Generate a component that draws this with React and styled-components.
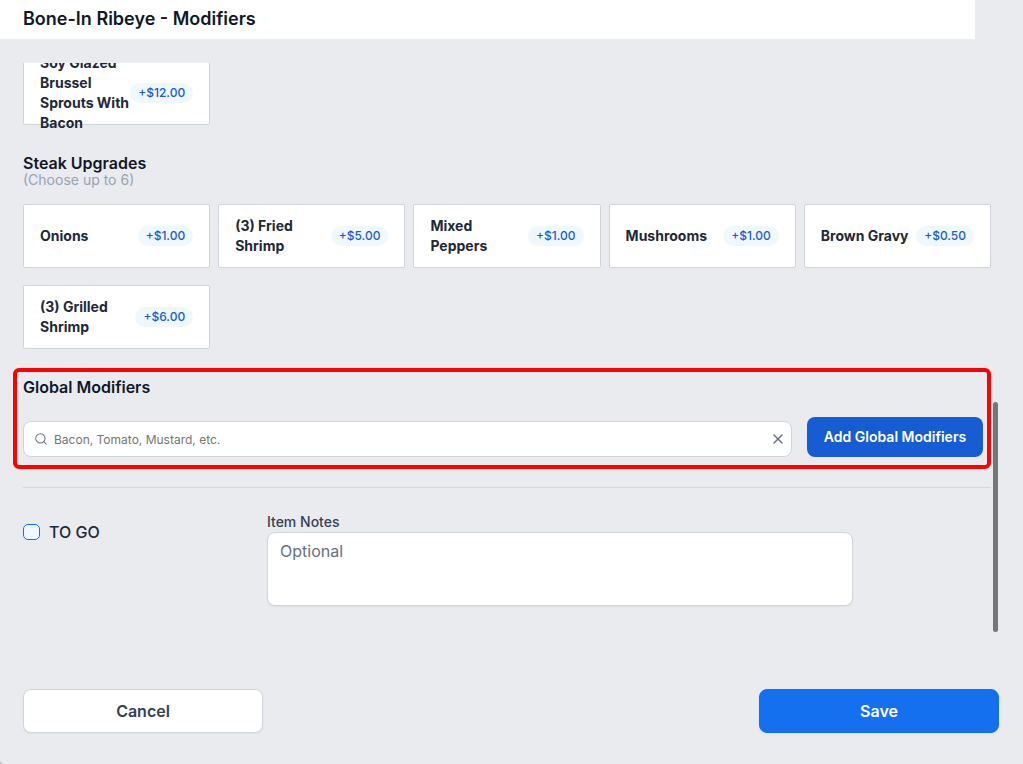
import React, { useState } from "react";
import styled, { createGlobalStyle } from "styled-components";
import { Search, X } from "lucide-react";

const GlobalStyle = createGlobalStyle`
  *, *::before, *::after { box-sizing: border-box; }
  body {
    margin: 0;
    background: #a9abb0;
    font-family: Inter, "Liberation Sans", sans-serif;
    color: #101828;
  }
  button, input, textarea { font-family: inherit; }
`;

const Dialog = styled.main`
  display: flex;
  flex-direction: column;
  height: 100vh;
  overflow: hidden;
  background: #eaebef;
  border-bottom-left-radius: 4px;
`;

const Header = styled.header`
  flex: none;
  margin-right: 48px;
  padding: 7px 23px 8px;
  background: #fff;
`;

const Title = styled.h1`
  margin: 0;
  font-size: 18px;
  line-height: 24px;
  font-weight: 600;
`;

const Body = styled.div`
  position: relative;
  flex: 1;
  min-height: 0;
  margin-top: 24px;
  padding: 0 32px 27px 23px;
  display: flex;
  flex-direction: column;
  justify-content: flex-end;
  overflow: hidden;
`;

const ScrollThumb = styled.div`
  position: absolute;
  right: 25px;
  bottom: 1px;
  width: 5px;
  height: 230px;
  border-radius: 3px;
  background: #747678;
`;

const Grid = styled.div`
  display: grid;
  grid-template-columns: repeat(5, 1fr);
  gap: 17px 8px;
`;

const Card = styled.button`
  display: flex;
  align-items: center;
  justify-content: space-between;
  height: 64px;
  min-width: 0;
  padding: 0 16px;
  border: 1px solid #d0d5dd;
  border-radius: 2px;
  background: #fff;
  text-align: left;
`;

const CardName = styled.span`
  font-size: 14px;
  line-height: 20px;
  font-weight: 700;
  color: #1d2939;
`;

const Price = styled.span`
  flex: none;
  padding: 0 8px;
  border-radius: 10px;
  background: #eff8ff;
  color: #175cd3;
  font-size: 12px;
  line-height: 20px;
  font-weight: 500;
`;

const Group = styled.section`
  padding-top: 30px;
`;

const GroupHead = styled.div`
  padding-bottom: 15px;
`;

const Heading = styled.h2`
  margin: 0;
  font-size: 16px;
  line-height: 16px;
  font-weight: 600;
`;

const Hint = styled.p`
  margin: 0;
  font-size: 14px;
  line-height: 18px;
  color: #98a2b3;
`;

const GlobalSection = styled.section`
  position: relative;
  margin-top: 30px;
  padding-bottom: 30px;
  border-bottom: 1px solid #d4d7dc;
`;

const Highlight = styled.div`
  position: absolute;
  inset: -11px 0 18px -10px;
  border: 4px solid #ff0000;
  border-radius: 6px;
  pointer-events: none;
`;

const GlobalRow = styled.div`
  display: flex;
  align-items: flex-end;
  gap: 15px;
  padding: 22px 8px 0 0;
`;

const SearchBox = styled.label`
  flex: 1;
  display: flex;
  align-items: center;
  gap: 6px;
  height: 36px;
  padding: 0 5px 0 10px;
  border: 1px solid #d0d5dd;
  border-radius: 8px;
  background: #fff;
  color: #667085;
`;

const SearchInput = styled.input`
  flex: 1;
  min-width: 0;
  padding: 2px 0 0;
  border: 0;
  outline: 0;
  background: transparent;
  font-size: 12px;
  line-height: 20px;
  color: #101828;
  &::placeholder { color: #757575; }
`;

const ClearButton = styled.button`
  display: flex;
  padding: 0;
  border: 0;
  background: transparent;
  color: #667085;
`;

const AddButton = styled.button`
  width: 176px;
  height: 40px;
  padding: 0;
  border: 0;
  border-radius: 8px;
  background: #175cd3;
  color: #fff;
  font-size: 14px;
  line-height: 20px;
  font-weight: 600;
`;

const DetailsRow = styled.div`
  display: grid;
  grid-template-columns: 25% 60%;
  margin-right: -8px;
  padding-top: 24px;
`;

const ToGo = styled.label`
  display: flex;
  align-items: center;
  align-self: start;
  gap: 9px;
  padding-top: 8px;
  font-size: 16px;
  line-height: 24px;
  font-weight: 500;
  color: #1d2939;
`;

const CheckBox = styled.input`
  appearance: none;
  width: 17px;
  height: 16px;
  margin: 0;
  border: 1px solid #1570ef;
  border-radius: 5px;
  background: #eff8ff;
  &:checked { background: #1570ef; }
`;

const Field = styled.div`
  display: flex;
  flex-direction: column;
`;

const FieldLabel = styled.label`
  font-size: 14px;
  line-height: 20px;
  font-weight: 500;
  color: #344054;
`;

const Notes = styled.textarea`
  height: 74px;
  padding: 6px 12px;
  border: 1px solid #d0d5dd;
  border-radius: 8px;
  outline: 0;
  resize: none;
  background: #fff;
  box-shadow: 0 1px 2px rgba(16, 24, 40, 0.05);
  font-size: 16px;
  line-height: 24px;
  color: #101828;
  &::placeholder { color: #667085; }
`;

const Footer = styled.footer`
  flex: none;
  display: flex;
  justify-content: space-between;
  padding: 56px 24px 31px 23px;
`;

const FooterButton = styled.button`
  width: 240px;
  height: 44px;
  border: 1px solid ${(p) => (p.$primary ? "#1570ef" : "#d0d5dd")};
  border-radius: 8px;
  background: ${(p) => (p.$primary ? "#1570ef" : "#fff")};
  color: ${(p) => (p.$primary ? "#fff" : "#344054")};
  box-shadow: 0 1px 2px rgba(16, 24, 40, 0.05);
  font-size: 16px;
  line-height: 24px;
  font-weight: 600;
`;

const upgrades = [
  { name: "Onions", price: "+$1.00" },
  { name: "(3) Fried Shrimp", price: "+$5.00" },
  { name: "Mixed Peppers", price: "+$1.00" },
  { name: "Mushrooms", price: "+$1.00" },
  { name: "Brown Gravy", price: "+$0.50" },
  { name: "(3) Grilled Shrimp", price: "+$6.00" },
];

function ModifierCard({ name, price }) {
  return (
    <Card type="button">
      <CardName>{name}</CardName>
      <Price>{price}</Price>
    </Card>
  );
}

export default function App() {
  const [query, setQuery] = useState("");
  return (
    <Dialog>
      <GlobalStyle />
      <Header>
        <Title>Bone-In Ribeye - Modifiers</Title>
      </Header>
      <Body>
        <Grid>
          <ModifierCard name="Soy Glazed Brussel Sprouts With Bacon" price="+$12.00" />
        </Grid>
        <Group>
          <GroupHead>
            <Heading>Steak Upgrades</Heading>
            <Hint>(Choose up to 6)</Hint>
          </GroupHead>
          <Grid>
            {upgrades.map((u) => (
              <ModifierCard key={u.name} {...u} />
            ))}
          </Grid>
        </Group>
        <GlobalSection>
          <Heading>Global Modifiers</Heading>
          <GlobalRow>
            <SearchBox>
              <Search size={14} strokeWidth={1.75} aria-hidden="true" />
              <SearchInput
                aria-label="Search global modifiers"
                placeholder="Bacon, Tomato, Mustard, etc."
                value={query}
                onChange={(e) => setQuery(e.target.value)}
              />
              <ClearButton type="button" aria-label="Clear search" onClick={() => setQuery("")}>
                <X size={16} />
              </ClearButton>
            </SearchBox>
            <AddButton type="button">Add Global Modifiers</AddButton>
          </GlobalRow>
          <Highlight />
        </GlobalSection>
        <DetailsRow>
          <ToGo>
            <CheckBox type="checkbox" />
            TO GO
          </ToGo>
          <Field>
            <FieldLabel htmlFor="item-notes">Item Notes</FieldLabel>
            <Notes id="item-notes" placeholder="Optional" />
          </Field>
        </DetailsRow>
        <ScrollThumb />
      </Body>
      <Footer>
        <FooterButton type="button">Cancel</FooterButton>
        <FooterButton type="button" $primary>Save</FooterButton>
      </Footer>
    </Dialog>
  );
}
